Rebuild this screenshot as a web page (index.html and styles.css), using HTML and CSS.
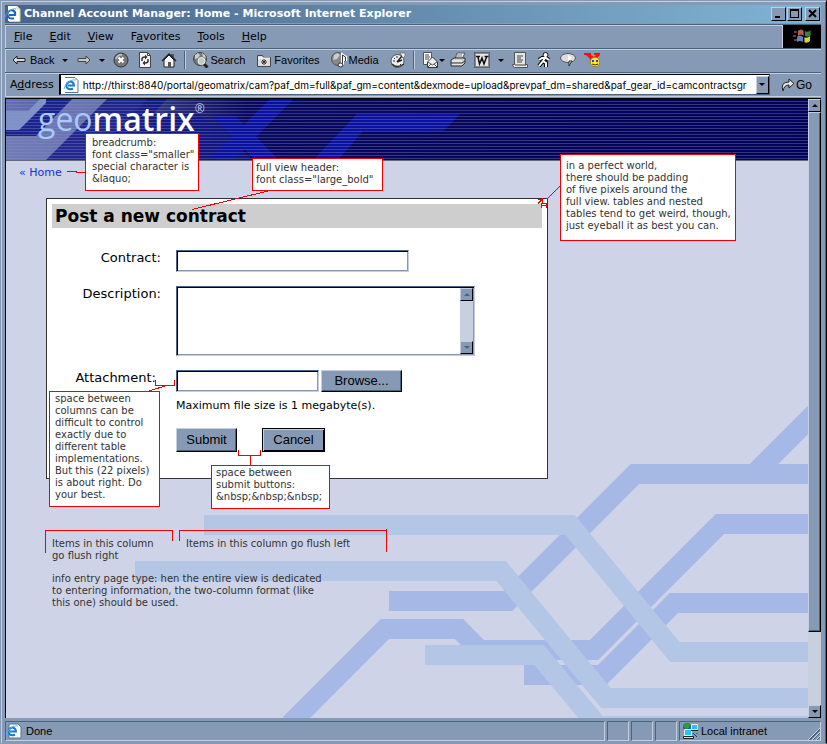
FILE: index.html
```html
<!DOCTYPE html>
<html lang="en">
<head>
<meta charset="utf-8">
<title>Channel Account Manager: Home</title>
<link rel="stylesheet" href="styles.css">
</head>
<body>
<div class="window">
  <header class="titlebar">
    <svg class="icon" viewBox="0 0 16 16"><path d="M3 0h9l3 3v12H3z" fill="#fff"/><path d="M12 0v3h3M15 3v12.500H4" fill="none" stroke="#d8cf9c"/><path d="M9 12.200C5 13.500 2.200 11 2.500 8S6 3.500 8 4.500s2.500 3 2 4.500H4" fill="none" stroke="#1668c8" stroke-width="2"/><path d="M0 11C2 6 7 2 11 3" fill="none" stroke="#39a5ee"/></svg>
    <h1>Channel Account Manager: Home - Microsoft Internet Explorer</h1>
    <div class="controls">
      <button aria-label="Minimize"><svg viewBox="0 0 11 10"><path d="M2 7h5v2H2z"/></svg></button>
      <button aria-label="Maximize"><svg viewBox="0 0 11 10"><path d="M1 0h9v9H1zM2 2v6h7V2z" fill-rule="evenodd"/></svg></button>
      <button aria-label="Close" class="close"><svg viewBox="0 0 11 10"><path d="M2 1l7 7M9 1L2 8" stroke="#000" stroke-width="2"/></svg></button>
    </div>
  </header>

  <nav class="menubar">
    <ul>
      <li><u>F</u>ile</li><li><u>E</u>dit</li><li><u>V</u>iew</li><li>F<u>a</u>vorites</li><li><u>T</u>ools</li><li><u>H</u>elp</li>
    </ul>
    <div class="throbber"><svg viewBox="0 0 20 18"><path d="M1 4h3v2H1zM0 8h3v2H0zM1 12h3v2H1z" fill="#6b3a35"/><path d="M5 4q3-3 6 0v5q-3-3-6 0z" fill="#c5574b"/><path d="M12 4q3 2 6-1v5q-3 3-6 1z" fill="#39843c"/><path d="M4 10q3-3 6 0v5q-3-2-6 0z" fill="#5b83c8"/><path d="M11 10q3 2 6-1v5q-3 3-6 1z" fill="#e2cf35"/><path d="M11 3v12M18 2v12" stroke="#111"/></svg></div>
  </nav>

  <div class="toolbar">
    <button class="back"><svg class="icon arrow" viewBox="0 0 14 12"><path d="M1 6l4-4v2.500h8v3H5V10z" fill="#d9d9d9" stroke="#222"/></svg>Back</button>
    <i class="caret"></i>
    <button aria-label="Forward" class="forward"><svg class="icon arrow" viewBox="0 0 14 12"><path d="M13 6L9 2v2.500H1v3h8V10z" fill="#c8c8c8" stroke="#444"/></svg></button>
    <i class="caret"></i>
    <button aria-label="Stop" class="wide"><svg class="icon" viewBox="0 0 16 16"><circle cx="8" cy="8" r="7" fill="#777" stroke="#333"/><path d="M3 7a5 5 0 0 1 6-4" stroke="#bbb" stroke-width="2" fill="none"/><path d="M5.500 5.500l5 5M10.500 5.500l-5 5" stroke="#fff" stroke-width="2"/></svg></button>
    <button aria-label="Refresh" class="wide"><svg class="icon" viewBox="0 0 16 16"><path d="M2.500.5h8l3 3v12h-11z" fill="#f5f5f5" stroke="#444"/><path d="M10.500.5v3h3" fill="none" stroke="#444"/><path d="M5 9V7q0-2 3-2M11 7v2q0 2-3 2" fill="none" stroke="#333" stroke-width="1.500"/><path d="M8 2.500v5L10.500 5zM8 8.500v5L5.500 11z" fill="#333"/></svg></button>
    <button aria-label="Home" class="wide"><svg class="icon" viewBox="0 0 16 16"><path d="M10 2h3v5h-3z" fill="#555"/><path d="M3 8v7h10V8L8 3z" fill="#f2f2f2" stroke="#222"/><path d="M1 9l7-7 7 7" fill="none" stroke="#222" stroke-width="1.500"/><path d="M7 10h3v5H7z" fill="#555"/></svg></button>
    <span class="sep"></span>
    <button><svg class="icon" viewBox="0 0 16 16"><circle cx="7" cy="7" r="6.500" fill="#777" stroke="#444"/><path d="M2 3l3-2 2 2-2 3-3 1zM9 1l3 2 1 3-3-1z" fill="#ccc"/><path d="M10.500 11.500l4 4" stroke="#222" stroke-width="3"/><circle cx="8.500" cy="9" r="3.500" fill="#bcc" stroke="#eee"/></svg>Search</button>
    <button class="wider"><svg class="icon" viewBox="0 0 16 16"><path d="M1.500 3.500h5l1 2h7v9h-13z" fill="#ddd" stroke="#444"/><path d="M2 6h12" stroke="#fff"/><path d="M8 7v6M5 10h6M6 8l4 4M10 8l-4 4" stroke="#333"/></svg>Favorites</button>
    <button class="wider"><svg class="icon" viewBox="0 0 16 16"><circle cx="7" cy="7" r="6.500" fill="#888" stroke="#555"/><path d="M3 3l3-2 3 2-3 4-4 1z" fill="#ccc"/><path d="M11.500 13V3l3 2v4" fill="none" stroke="#fff" stroke-width="3"/><path d="M11.500 13V3l3 2v4" fill="none" stroke="#333"/><ellipse cx="9.500" cy="13" rx="2.500" ry="2" fill="#eee" stroke="#333"/></svg>Media</button>
    <button aria-label="History" class="wider"><svg class="icon" viewBox="0 0 16 16"><circle cx="7.500" cy="9" r="6.500" fill="#eee" stroke="#555"/><path d="M2 12q5 5 12 0" fill="none" stroke="#333" stroke-width="1.500"/><path d="M3 9h2M7 4v2M4 6l1 1M10 12l1 1" stroke="#333"/><path d="M7 10l5-6M7 10l5-2" stroke="#222" stroke-width="1.500"/><path d="M10 1h5v3l-2 2z" fill="#eee" stroke="#444" stroke-width=".5"/></svg></button>
    <span class="sep"></span>
    <button aria-label="Mail"><svg class="icon" viewBox="0 0 16 16"><path d="M1.500.5h8v12h-8z" fill="#fff" stroke="#555"/><path d="M3 3h4M3 5h5M3 7h4" stroke="#444"/><path d="M5.500 10l5-5 5 5v5.500h-10z" fill="#eee" stroke="#333"/><path d="M6 10l4.500 3 4.500-3M6 15l3-3M15 15l-3-3" fill="none" stroke="#555"/></svg></button>
    <i class="caret near"></i>
    <button aria-label="Print"><svg class="icon" viewBox="0 0 16 16"><path d="M5 7l2-6h8l-3 6z" fill="#fff" stroke="#555"/><path d="M7 3h5M6 5h6" stroke="#777"/><path d="M1 8l3-2h11v5l-3 3H1z" fill="#ccc" stroke="#333"/><path d="M2 9h10M2 12h10" stroke="#fff"/><path d="M1 11h11l3-2" fill="none" stroke="#333"/></svg></button>
    <button aria-label="Edit with Word" class="wide"><svg class="icon" viewBox="0 0 16 16"><path d="M.5.500h15v15H.5z" fill="#ddd" stroke="#111" stroke-width="1" stroke-dasharray="1 1"/><path d="M1.500 1.500h13v13h-13z" stroke="#333" fill="#e6e6e6" stroke-dasharray="1 1"/><path d="M2 4.500h4M4 5l1.500 7 2.500-6 2 6 2.500-7M10.500 4.500h4" fill="none" stroke="#111" stroke-width="1.500"/></svg></button>
    <i class="caret"></i>
    <button aria-label="Edit" class="wide"><svg class="icon" viewBox="0 0 16 16"><path d="M2.500.5h11v12h2v3h-13q-2-1-2-3h2z" fill="#e5e5e5" stroke="#555"/><path d="M5 4h6M5 6h4M5 8h6M5 10h5M3 13h11" stroke="#444"/></svg></button>
    <button aria-label="Messenger" class="wide"><svg class="icon" viewBox="0 0 16 16"><path d="M10 5L7 9l-4 5M7 9l3 2v4M3 8l3-2h4l3 2" fill="none" stroke="#111" stroke-width="4"/><circle cx="9.500" cy="3" r="2.500" fill="#fff" stroke="#111"/><path d="M9 6L7 9l-4 5M7 9l3 2v4M3 8l3-2h4l3 2" fill="none" stroke="#fff" stroke-width="2"/></svg></button>
    <button aria-label="Discuss" class="wide"><svg class="icon" viewBox="0 0 16 16"><ellipse cx="8" cy="6" rx="7.500" ry="4.500" fill="#ddd" stroke="#555"/><path d="M9 9v5l3-5z" fill="#ddd" stroke="#333"/><path d="M8 3l4 3-4 3z" fill="#fff"/></svg></button>
    <button aria-label="Yahoo Messenger" class="wide"><svg class="icon" viewBox="0 0 16 16"><path d="M0 1h7v2l3 2 2-2h-2V1h6v2l-5 5v2H6V7L2 3H0z" fill="#ef1414"/><circle cx="11" cy="10" r="4.800" fill="#ffe52c" stroke="#9a8200"/><path d="M9 8v2M13 8v2" stroke="#1a3cff" stroke-width="2"/><path d="M8 12q3 2 6 0" fill="none" stroke="#403000"/></svg></button>
  </div>

  <div class="addressbar">
    <label for="url">A<u>d</u>dress</label>
    <div class="urlbox">
      <svg class="icon" viewBox="0 0 16 16"><path d="M2 0h10l3 3v13H2z" fill="#fff"/><path d="M2 .5h10l3 3v12H2" fill="none" stroke="#58749c"/><path d="M10 11.500C6 13.500 3 11 3.500 8S7 4 9 5s2 2 2 3.500H5" fill="none" stroke="#1b79cc" stroke-width="2"/><path d="M1 12C2 6 8 2 13 3" fill="none" stroke="#54bbef"/></svg>
      <input id="url" type="text" value="http://thirst:8840/portal/geomatrix/cam?paf_dm=full&amp;paf_gm=content&amp;dexmode=upload&amp;prevpaf_dm=shared&amp;paf_gear_id=camcontractsgr">
      <button aria-label="Show addresses"><i class="caret"></i></button>
    </div>
    <button class="go"><svg class="icon" viewBox="0 0 16 16"><path d="M3 14Q0 5 9 5V2l5 4.500L9 11V8q-5 0-6 6z" fill="#e4e4e4" stroke="#222"/></svg>Go</button>
  </div>

  <div class="viewport">
    <main class="page">
      <svg class="backdrop" viewBox="6 99 802 619" width="802" height="619" fill="none" stroke-width="20" aria-hidden="true">
        <g stroke="#a6b8e6"><path d="M389 601H508L635 474H820M754 474L820 408M290 724L385 629H459L480 650H594L720 524H820M524 675H602L674 603H820"/></g>
        <g stroke="#b3c6e6"><path d="M204 525H570L675 652H820M135 571H501L606 698H820M425 655H539L598 726H820"/></g>
      </svg>

      <header class="banner">
        <svg class="banner-art" width="802" height="61" viewBox="0 0 802 61" aria-hidden="true">
          <defs>
            <linearGradient id="fade"><stop offset="0" stop-color="#6770b4"/><stop offset=".12" stop-color="#48509c"/><stop offset=".3" stop-color="#08085e"/><stop offset="1" stop-color="#02025a"/></linearGradient>
            <pattern id="lines" width="3" height="3" patternUnits="userSpaceOnUse"><path d="M0 2.500h3" stroke="#8c94bd" stroke-opacity=".35"/></pattern>
          </defs>
          <path d="M0 0h802v61H0z" fill="url(#fade)"/>
          <path d="M0 12h22L34 0h24L29 31H0z" fill="#7f91c9"/>
          <path d="M0 37h30L66 0h75L80 61H0z" fill="#7580b9" fill-opacity=".7"/>
          <path d="M40 61L101 0h60l-14 15h45l30 20 24 26z" fill="#101487" fill-opacity=".8"/>
          <path d="M0 31h13L40 4V0h26L30 37H0z" fill="#1a2290"/>
          <path d="M203 61l61-61h24l-61 61zM205 17h24l44 44h-24zM307 61l44-46h103l-16 17h-81l-25 29z" fill="#0a11a2"/>
          <path d="M0 0h802v61H0z" fill="url(#lines)"/>
        </svg>
        <div class="logo"><span>geo</span>matrix<sup>®</sup></div>
      </header>

      <div class="crumb"><a href="#">« Home</a></div>

      <form class="card">
        <h2>Post a new contract</h2>
        <div class="fields">
          <label for="contract">Contract:</label>
          <input id="contract" class="sunken contract" type="text">
          <label for="description">Description:</label>
          <div class="sunken area">
            <textarea id="description"></textarea>
            <div class="bar"><i class="up"></i><i class="down"></i></div>
          </div>
          <label for="attachment" class="attach">Attachment:</label>
          <div>
            <div class="file"><input id="attachment" class="sunken" type="text"><button type="button" class="raised browse">Browse...</button></div>
            <p>Maximum file size is 1 megabyte(s).</p>
          </div>
          <div class="actions"><button type="button" class="raised">Submit</button><button type="button" class="raised default">Cancel</button></div>
        </div>
      </form>

      <section class="remarks">
        <div class="columns"><p>Items in this column<br>go flush right</p><p>Items in this column go flush left</p></div>
        <p>info entry page type: hen the entire view is dedicated<br>to entering information, the two-column format (like<br>this one) should be used.</p>
      </section>

      <svg class="marks" viewBox="6 99 802 619" width="802" height="619" fill="none" stroke="#f00000" aria-hidden="true">
        <path d="M67 171.500h9l1 1h9M192 209.500L268 191M547 199l13-13M155.500 380v5.500h19V380M149 391l16-5M238.500 450v5.500h22V450M250.500 456v9M45.500 553v-22.500h127V541M179.500 541v-10.500h207M386.500 529v23M538 199.500h4v4h5M541.500 203v5M546.500 203v5M538 203.500l5-5M541.500 205.500h5"/>
      </svg>
      <aside class="note n1">breadcrumb:<br>font class="smaller"<br>special character is<br>&amp;laquo;</aside>
      <aside class="note n2">full view header:<br>font class="large_bold"</aside>
      <aside class="note n3">in a perfect world,<br>there should be padding<br>of five pixels around the<br>full view. tables and nested<br>tables tend to get weird, though,<br>just eyeball it as best you can.</aside>
      <aside class="note n4">space between<br>columns can be<br>difficult to control<br>exactly due to<br>different table<br>implementations.<br>But this (22 pixels)<br>is about right. Do<br>your best.</aside>
      <aside class="note n5">space between<br>submit buttons:<br>&amp;nbsp;&amp;nbsp;&amp;nbsp;</aside>
    </main>
    <div class="scroll"><i class="up"></i><div class="thumb"></div><i class="down"></i></div>
  </div>

  <footer class="status">
    <div class="cell grow"><svg class="icon" viewBox="0 0 16 16"><path d="M3 1h9l3 3v11H3z" fill="#fff" stroke="#58749c"/><path d="M9 11.500C5 13.500 2 11 2.500 8S6 4 8 5s2 2 2 3.500H4" fill="none" stroke="#1b79cc" stroke-width="2"/><path d="M0 12C2 6 7 2 12 3" fill="none" stroke="#54bbef"/></svg>Done</div>
    <div class="cell"></div><div class="cell"></div><div class="cell"></div>
    <div class="cell zone"><svg class="icon" viewBox="0 0 16 16"><circle cx="5" cy="4" r="4" fill="#2c50b5"/><path d="M1 3l3-3 4 1-1 4-3 1z" fill="#28a428"/><path d="M9.500 1.500h6v5h-6zM2.500 6.500h7v6h-7z" fill="#25c4f4" stroke="#eee"/><path d="M9 7.500h7M1.500 13.500h10v2h-10z" stroke="#222" fill="#ddd"/><path d="M11 10l4 4M15 10v1" stroke="#113f6f"/></svg>Local intranet
      <svg class="grip" viewBox="0 0 12 12"><path d="M0 12L12 0M4 12l8-8M8 12l4-4" stroke="#c8d3e0"/><path d="M1 12L12 1M2 12L12 2M5 12l7-7M9 12l3-3" stroke="#486480"/></svg>
    </div>
  </footer>
</div>
</body>
</html>
```
FILE: styles.css
```css
:root { --face: #869ab5; --light: #c3cfdf; --dark: #486480; }
* { box-sizing: border-box; }
body { margin: 0; background: var(--face); color: #000; font: 11px/14px "DejaVu Sans", Verdana, sans-serif; }
h1, h2, p, ul { margin: 0; padding: 0; font-size: inherit; }
button, input, textarea { font: inherit; color: inherit; border: 0; padding: 0; margin: 0; background: none; border-radius: 0; outline: 0; }
svg { display: block; flex: none; }
u { text-underline-offset: 1px; }
.icon { width: 16px; height: 16px; }

.window { min-height: 100vh; display: flex; flex-direction: column; padding: 4px 5px 2px 4px; border: 1px solid var(--face); border-right-color: #000; box-shadow: inset 1px 1px var(--light), inset -1px 0 var(--dark); }
.titlebar { display: flex; align-items: center; gap: 3px; height: 18px; background: linear-gradient(90deg, #48648a, #82b4d4); color: #fff; }
.titlebar h1 { flex: 1; font-weight: bold; white-space: nowrap; }
.controls { display: flex; gap: 1px; }
.controls button { width: 15px; height: 14px; background: var(--face); border: 1px solid; border-color: var(--light) #000 #000 var(--light); padding: 1px; }
.controls .close { margin: 0 1px 0 2px; }

.menubar, .toolbar, .addressbar { display: flex; align-items: center; height: 24px; border-top: 1px solid var(--dark); box-shadow: inset 0 1px var(--light), inset 1px 0 var(--light); }
.menubar { margin-top: 1px; }
.menubar ul { flex: 1; display: flex; gap: 17px; padding-left: 9px; list-style: none; }
.throbber { width: 39px; height: 23px; background: #000; padding: 2px 10px; border-left: 1px solid var(--light); }
.throbber svg { width: 20px; height: 18px; }

.toolbar { padding: 0 0 1px 7px; font: 11px/14px "Liberation Sans", Arial, sans-serif; }
.toolbar button { display: flex; align-items: center; gap: 1px; }
.toolbar .wide { margin-left: 8px; }
.toolbar .wider { margin-left: 11px; gap: 2px; }
.toolbar .back { gap: 4px; }
.toolbar .forward { margin-left: 9px; }
.arrow { width: 14px; height: 12px; }
.caret { width: 0; border: 3px solid transparent; border-top-color: #000; border-bottom: 0; margin-left: 8px; }
.caret.near { margin: 0 5px 0 1px; }
.sep { width: 2px; height: 18px; margin: 0 7px; border-left: 1px solid var(--dark); border-right: 1px solid var(--light); }

.addressbar { gap: 5px; padding-left: 5px; height: 25px; border-bottom: 1px solid var(--light); }
.urlbox { flex: 1; display: flex; align-items: center; height: 21px; padding-left: 2px; background: #fff; border: 1px solid var(--dark); border-top-color: #000; border-left: 2px solid #000; font: 10px/14px Inter, Arial, sans-serif; }
.urlbox input { flex: 1; min-width: 0; padding-left: 4px; }
.urlbox button { width: 13px; height: 18px; background: var(--face); border: 1px solid; border-color: var(--light) #000 #000 var(--light); }
.urlbox .caret { display: block; margin: 0 0 0 2px; }
.go { display: flex; align-items: center; width: 46px; padding-left: 5px; font: 12px/14px "Liberation Sans", Arial, sans-serif; }

.viewport { flex: 1; display: flex; border: 1px solid #000; border-width: 1px 0 0 1px; margin: 1px 0 3px; }
.page { position: relative; flex: 1; min-width: 0; overflow: hidden; background: #ced3e7; }
.backdrop { position: absolute; right: 0; bottom: 0; }
.banner { position: relative; height: 62px; background: #02025a; border-bottom: 1px solid #666878; }
.banner-art { position: absolute; left: 0; top: 0; }
.logo { position: relative; padding-left: 32px; color: #fff; font: 32px/40px "Open Sans", sans-serif; font-weight: 600; }
.logo span { color: #a9c9fa; font-weight: 400; }
.logo sup { font-size: 12px; line-height: 12px; font-weight: 400; vertical-align: 18px; color: #c4c8e8; }
.crumb { padding: 5px 0 0 13px; height: 37px; }
.crumb a { color: #0c32e8; text-decoration: none; }

.card { position: relative; width: 502px; height: 281px; margin-left: 40px; padding: 5px; background: #fff; border: 1px solid #333; font-size: 13px; line-height: 16px; }
.card h2 { padding: 0 3px; background: #cecece; font-size: 17px; line-height: 24px; }
.fields { display: grid; grid-template-columns: 109px auto; column-gap: 15px; row-gap: 14px; justify-content: start; margin-top: 22px; }
.fields > label { text-align: right; }
.fields > .attach { margin-right: 5px; }
.sunken { padding: 1px; background: #fff; border: 1px solid; border-color: var(--dark) var(--light) var(--light) var(--dark); box-shadow: inset 1px 1px #000, inset -1px -1px var(--face); outline: 0; }
.contract { width: 233px; height: 22px; }
.area { display: flex; width: 299px; height: 70px; }
.area textarea { flex: 1; min-width: 0; resize: none; }
.bar { display: flex; flex-direction: column; justify-content: space-between; width: 13px; background: #c8d0e0; }
.bar i, .scroll > i { display: flex; justify-content: center; align-items: center; width: 13px; height: 13px; background: var(--face); border: 1px solid; border-color: var(--light) #000 #000 var(--light); }
.up::after, .down::after { content: ""; border: 3px solid transparent; }
.up::after { border-top: 0; border-bottom-color: var(--dark); }
.down::after { border-bottom: 0; border-top-color: var(--dark); }
.file { display: flex; gap: 2px; }
.file input { width: 143px; height: 22px; }
.fields p { margin-top: 5px; font-size: 11px; line-height: 17px; }
.actions { grid-column: 2; display: flex; gap: 25px; }
.raised { width: 61px; height: 24px; background: var(--face); border: 1px solid; border-color: var(--light) #000 #000 var(--light); box-shadow: inset -1px -1px var(--dark); font: 13px/16px "Liberation Sans", Arial, sans-serif; }
.browse { width: 81px; height: 22px; }
.default { width: 63px; border: 1px solid #000; box-shadow: inset 1px 1px var(--light), inset -1px -1px #000; }

.remarks { position: relative; padding: 59px 0 0 46px; color: #333; font-size: 10px; line-height: 12px; }
.columns { display: grid; grid-template-columns: 134px auto; margin-bottom: 11px; }
.marks { position: absolute; left: 0; top: 0; shape-rendering: crispEdges; }
.note { position: absolute; background: #fff; border: 1px solid #f00000; padding: 3px 5px; color: #333; font-size: 10px; line-height: 12px; white-space: nowrap; }
.n1 { left: 79px; top: 34px; width: 114px; height: 58px; padding-left: 6px; }
.n2 { left: 246px; top: 59px; width: 131px; height: 33px; padding-left: 3px; }
.n3 { left: 554px; top: 55px; width: 176px; height: 87px; padding-top: 5px; }
.n4 { left: 43px; top: 292px; width: 111px; height: 116px; padding-top: 1px; }
.n5 { left: 205px; top: 366px; width: 119px; height: 44px; padding-top: 1px; padding-left: 4px; }

.scroll { display: flex; flex-direction: column; width: 13px; background: #c8d0e0; }
.scroll .thumb { flex: 0 0 84%; max-height: 522px; background: var(--face); border: 1px solid; border-color: var(--light) #000 #000 var(--light); box-shadow: inset -1px -1px var(--dark); }
.scroll .thumb + i { margin-top: auto; }
.scroll .up::after { border-bottom-color: #000; }
.scroll .down::after { border-top-color: #000; }

.status { display: flex; gap: 2px; height: 20px; font: 11px/14px "Liberation Sans", Arial, sans-serif; }
.cell { display: flex; align-items: center; gap: 3px; width: 22px; border: 1px solid; border-color: var(--dark) var(--light) var(--light) var(--dark); }
.cell.grow { flex: 1; gap: 4px; }
.cell.zone { width: 142px; padding-left: 2px; }
.grip { width: 12px; height: 12px; margin: auto 0 0 auto; }
```
